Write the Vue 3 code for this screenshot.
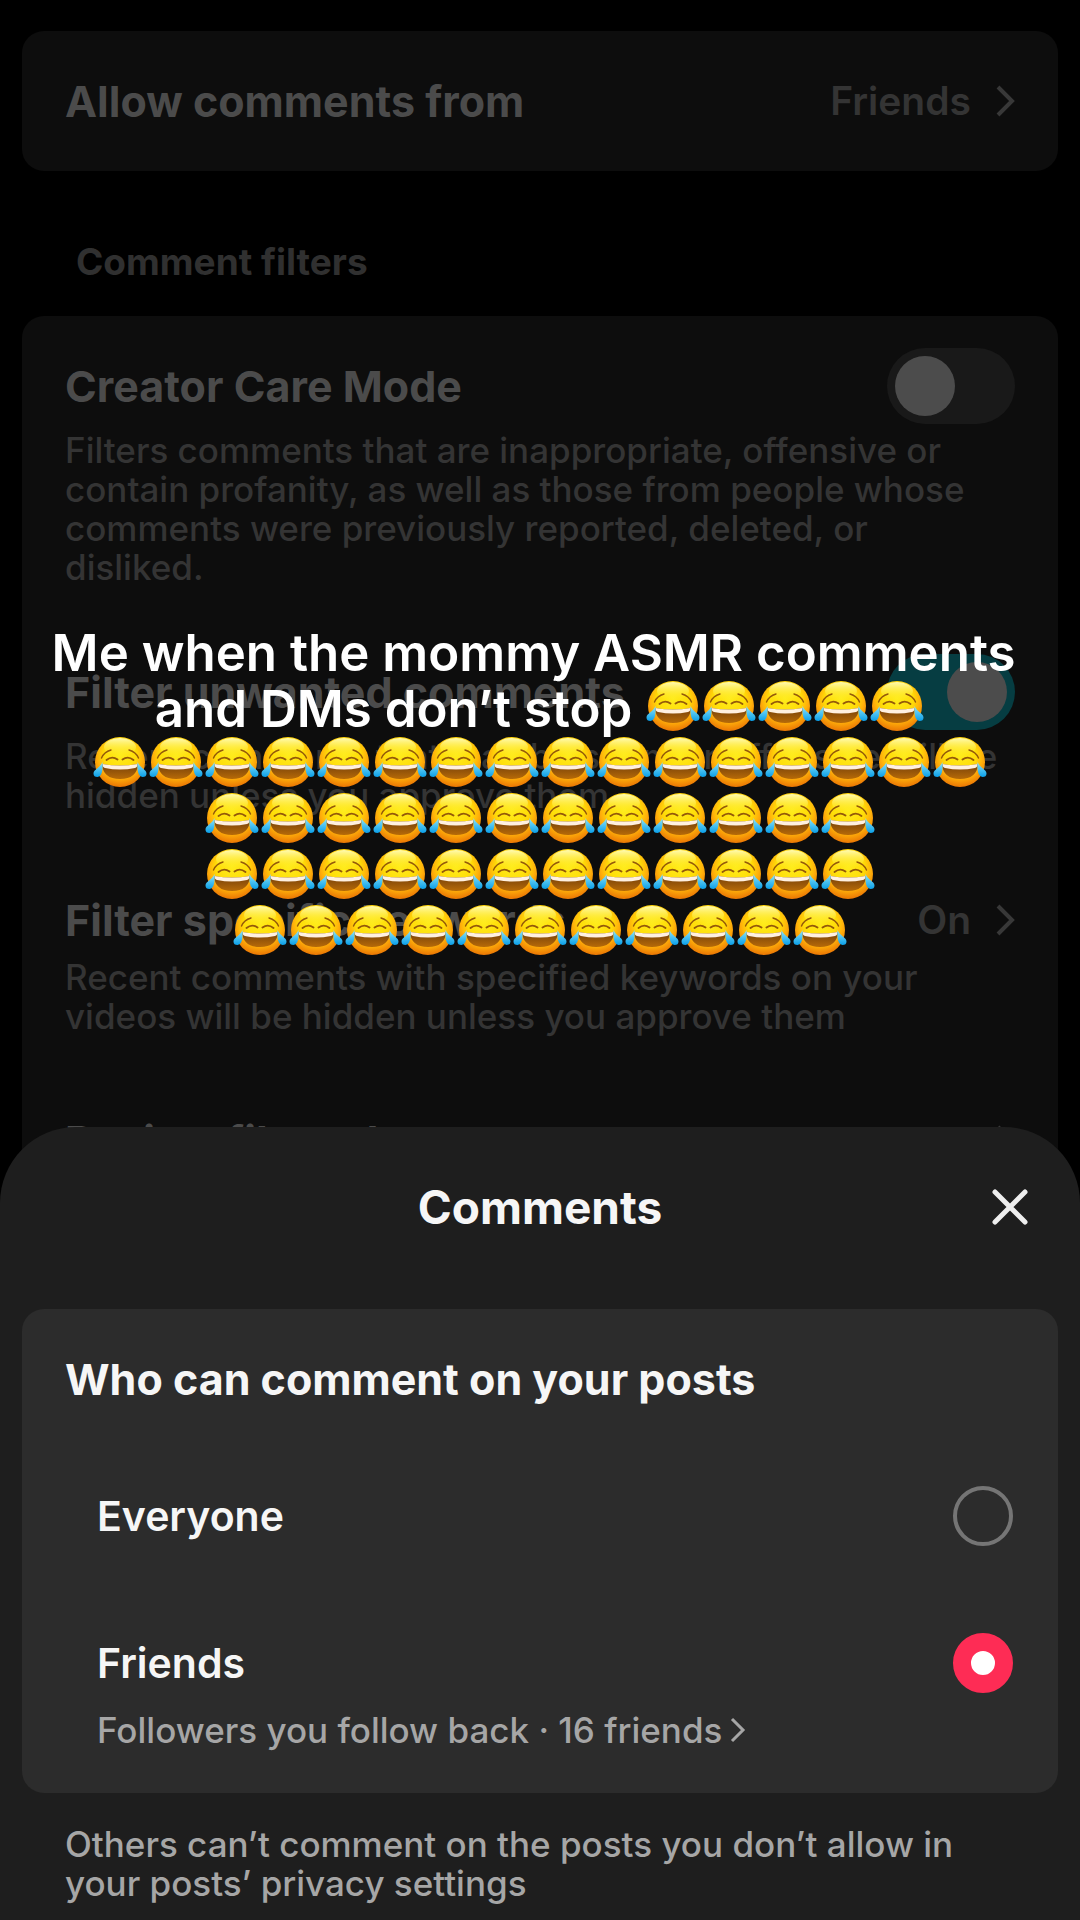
<script setup>
import { ref } from 'vue';

const audience = ref('friends');

const filters = ref([
  {
    id: 'care',
    title: 'Creator Care Mode',
    text: 'Filters comments that are inappropriate, offensive or contain profanity, as well as those from people whose comments were previously reported, deleted, or disliked.',
    toggle: true,
    on: false
  },
  {
    id: 'unwanted',
    title: 'Filter unwanted comments',
    text: 'Recent comments that may be spam or offensive will be hidden unless you approve them',
    toggle: true,
    on: true
  },
  {
    id: 'keywords',
    title: 'Filter specific keywords',
    text: 'Recent comments with specified keywords on your videos will be hidden unless you approve them',
    value: 'On'
  },
  {
    id: 'review',
    title: 'Review filtered comments'
  }
]);

// emojis per caption line
const emojiRows = [16, 12, 12, 11];
</script>

<template>
  <div class="screen">
    <svg class="defs" aria-hidden="true">
      <defs>
        <radialGradient id="face" cx="0.5" cy="0.36" r="0.64">
          <stop offset="0" stop-color="#ffec1c" />
          <stop offset="0.5" stop-color="#ffdd08" />
          <stop offset="0.72" stop-color="#ffb00a" />
          <stop offset="1" stop-color="#ea7604" />
        </radialGradient>
        <linearGradient id="shine" x1="0" y1="0" x2="0" y2="1">
          <stop offset="0" stop-color="#fffbb4" />
          <stop offset="1" stop-color="#ffee30" stop-opacity="0" />
        </linearGradient>
        <linearGradient id="mouth" x1="0" y1="0" x2="0" y2="1">
          <stop offset="0" stop-color="#75400a" />
          <stop offset="1" stop-color="#b66a08" />
        </linearGradient>
        <linearGradient id="tear" x1="0" y1="0" x2="0" y2="1">
          <stop offset="0" stop-color="#8fe6fb" />
          <stop offset="1" stop-color="#0a9fe8" />
        </linearGradient>
        <symbol id="joy" viewBox="0 0 56 56">
          <circle cx="28" cy="28" r="25" fill="url(#face)" />
          <ellipse cx="28" cy="13" rx="16" ry="9" fill="url(#shine)" />
          <g fill="none" stroke="#94590a" stroke-linecap="round">
            <path d="M9.500 24Q12 18 19 16M46.500 24Q44 18 37 16" stroke-width="1.400" />
            <path d="M14.500 26Q20 21.500 25.500 25.500M41.500 26Q36 21.500 30.500 25.500" stroke-width="1.900" />
          </g>
          <path d="M10 30Q28 33 46 30Q45 45 28 45Q11 45 10 30Z" fill="url(#mouth)" />
          <path d="M10.500 30Q28 33 45.500 30Q45.500 33.500 43 34Q28 37 13 34Q10.500 33.500 10.500 30Z" fill="#fff0e0" />
          <path d="M10.500 28Q11.500 42 5.500 43Q1.500 43 1.500 39.500C1.500 35.500 8 34 10.500 28Z" fill="url(#tear)" />
          <path d="M45.500 28Q44.500 42 50.500 43Q54.500 43 54.500 39.500C54.500 35.500 48 34 45.500 28Z" fill="url(#tear)" />
        </symbol>
      </defs>
    </svg>

    <main class="settings">
      <section class="card allow">
        <a class="row" href="#audience">
          <span class="title">Allow comments from</span>
          <span class="value">Friends</span>
          <svg class="chevron" viewBox="0 0 20 34"><path d="M3 3l14 14L3 31" /></svg>
        </a>
      </section>

      <h2 class="section-title">Comment filters</h2>

      <section class="card filters">
        <div v-for="f in filters" :key="f.id" class="item">
          <label v-if="f.toggle" class="row with-switch">
            <span class="title">{{ f.title }}</span>
            <input v-model="f.on" class="switch" type="checkbox" role="switch" />
          </label>
          <a v-else class="row" :href="'#' + f.id">
            <span class="title">{{ f.title }}</span>
            <span v-if="f.value" class="value">{{ f.value }}</span>
            <svg class="chevron" viewBox="0 0 20 34"><path d="M3 3l14 14L3 31" /></svg>
          </a>
          <p v-if="f.text" class="desc">{{ f.text }}</p>
        </div>
      </section>
    </main>

    <section class="sheet" role="dialog" aria-labelledby="sheet-title">
      <header class="sheet-head">
        <h1 id="sheet-title">Comments</h1>
        <button class="close" type="button" aria-label="Close">
          <svg viewBox="0 0 36 36"><path d="M3 3l30 30M33 3L3 33" /></svg>
        </button>
      </header>

      <fieldset class="options">
        <legend>Who can comment on your posts</legend>
        <div class="option">
          <label for="everyone">Everyone</label>
          <input id="everyone" v-model="audience" type="radio" name="audience" value="everyone" />
        </div>
        <div class="option">
          <label for="friends">Friends</label>
          <input id="friends" v-model="audience" type="radio" name="audience" value="friends" />
        </div>
        <a class="friends-link" href="#friends-list">
          Followers you follow back · 16 friends
          <svg viewBox="0 0 16 26"><path d="M2 2l11 11L2 24" /></svg>
        </a>
      </fieldset>

      <p class="note">Others can’t comment on the posts you don’t allow in your posts’ privacy settings</p>
    </section>

    <div class="caption">
      <p class="line">Me when the mommy ASMR comments&nbsp;</p>
      <p class="line">
        <span>and DMs don’t stop&nbsp;</span>
        <svg v-for="n in 5" :key="n" class="emoji" role="img" aria-label="😂"><use href="#joy" /></svg>
      </p>
      <p v-for="(count, i) in emojiRows" :key="i" class="line">
        <svg v-for="n in count" :key="n" class="emoji" role="img" aria-label="😂"><use href="#joy" /></svg>
      </p>
    </div>
  </div>
</template>

<style>
body {
  margin: 0;
  background: #000;
}
</style>

<style scoped>
.screen {
  position: relative;
  height: 100vh;
  min-height: 1600px;
  overflow: hidden;
  box-sizing: border-box;
  padding: 31px 22px 0;
  font-family: Inter, 'Liberation Sans', sans-serif;
  background: #000;
}

.defs {
  position: absolute;
  width: 0;
  height: 0;
}

h1,
h2,
p {
  margin: 0;
}

a {
  color: inherit;
  text-decoration: none;
}

.card {
  padding: 32px 43px;
  border-radius: 22px;
  background: #0d0d0d;
}

.row {
  display: flex;
  align-items: center;
  height: 76px;
}

.title {
  flex: 1;
  font-size: 43px;
  font-weight: 700;
  line-height: 50px;
  color: #4b4b4b;
}

.value {
  margin-right: 24px;
  font-size: 39px;
  font-weight: 600;
  line-height: 46px;
  color: #343434;
}

.chevron {
  width: 20px;
  height: 34px;
  fill: none;
  stroke: #383838;
  stroke-width: 4;
}

.section-title {
  margin: 69px 54px 32px;
  font-size: 37px;
  font-weight: 700;
  line-height: 44px;
  color: #303030;
}

.filters {
  padding-bottom: 600px;
  border-radius: 22px 22px 0 0;
}

.item + .item {
  margin-top: 67px;
}

.desc {
  padding-right: 8px;
  font-size: 35px;
  font-weight: 500;
  line-height: 39px;
  color: #343434;
}

.with-switch + .desc {
  margin-top: 7px;
}

.switch {
  appearance: none;
  width: 128px;
  height: 76px;
  margin: 0;
  padding: 8px;
  box-sizing: border-box;
  border-radius: 38px;
  background: #191919;
}

.switch::before {
  content: '';
  display: block;
  width: 60px;
  height: 60px;
  border-radius: 50%;
  background: #4c4c4c;
}

.switch:checked {
  background: #063d42;
}

.switch:checked::before {
  margin-left: auto;
}

.sheet {
  position: absolute;
  left: 0;
  right: 0;
  bottom: 0;
  padding: 0 22px 17px;
  border-radius: 76px 76px 0 0;
  background: #1e1e1e;
  color: #f6f6f6;
}

.sheet-head {
  display: grid;
  grid-template-columns: 60px 1fr 60px;
  align-items: center;
  height: 160px;
  padding: 0 18px 22px;
}

.sheet-head h1 {
  grid-column: 2;
  font-size: 46px;
  font-weight: 700;
  line-height: 52px;
  text-align: center;
}

.close {
  display: flex;
  align-items: center;
  justify-content: center;
  width: 60px;
  height: 60px;
  padding: 0;
  border: 0;
  background: none;
}

.close svg {
  width: 36px;
  height: 36px;
  stroke: #eee;
  stroke-width: 5;
  stroke-linecap: round;
}

.options {
  min-width: 0;
  margin: 0;
  padding: 44px 43px 43px;
  border: 0;
  border-radius: 22px;
  background: #2c2c2c;
}

.options legend {
  float: left;
  width: 100%;
  margin-bottom: 64px;
  padding: 0;
  font-size: 43px;
  font-weight: 700;
  line-height: 52px;
}

.option {
  clear: both;
  display: flex;
  align-items: center;
  justify-content: space-between;
  height: 94px;
  padding: 0 2px 0 32px;
  font-size: 41px;
  font-weight: 600;
}

.option + .option {
  margin-top: 53px;
}

.option label {
  flex: 1;
}

.option input {
  appearance: none;
  width: 60px;
  height: 60px;
  margin: 0;
  box-sizing: border-box;
  border: 4px solid #757575;
  border-radius: 50%;
}

.option input:checked {
  border: 18px solid #fe2c55;
  background: #fff;
}

.friends-link {
  display: flex;
  align-items: center;
  gap: 8px;
  padding-left: 32px;
  font-size: 35px;
  font-weight: 500;
  line-height: 40px;
  color: #a6a6a6;
}

.friends-link svg {
  width: 16px;
  height: 26px;
  fill: none;
  stroke: #a6a6a6;
  stroke-width: 3;
}

.note {
  padding: 32px 43px 0;
  font-size: 35px;
  font-weight: 500;
  line-height: 39px;
  color: #a6a6a6;
}

.caption {
  position: absolute;
  top: 622px;
  left: 0;
  right: 0;
  font-size: 51px;
  font-weight: 600;
  line-height: 62px;
  color: #fff;
}

.line {
  display: flex;
  justify-content: center;
  height: 56px;
  white-space: nowrap;
}

.emoji {
  flex: none;
  width: 56px;
  height: 56px;
}
</style>
